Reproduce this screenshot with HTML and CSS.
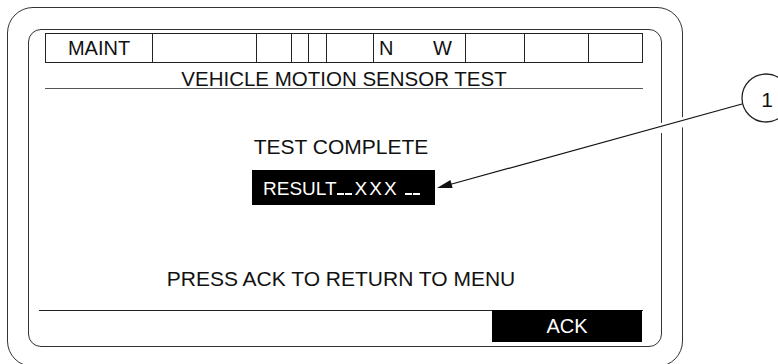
FILE: index.html
```html
<!DOCTYPE html>
<html lang="en">
<head>
  <meta charset="UTF-8">
  <title>Vehicle Motion Sensor Test</title>
  <link rel="stylesheet" href="styles.css">
</head>
<body>
  <div class="panel">
    <div class="screen">
      <div class="status">
        <div class="cell">MAINT</div>
        <div class="cell"></div>
        <div class="cell"></div>
        <div class="cell"></div>
        <div class="cell"></div>
        <div class="cell"></div>
        <div class="cell split"><span>N</span><span>W</span></div>
        <div class="cell"></div>
        <div class="cell"></div>
        <div class="cell"></div>
      </div>
      <div class="title">VEHICLE MOTION SENSOR TEST</div>

      <div class="message">TEST COMPLETE</div>
      <div class="result">
        <span>RESULT</span><span class="blank"><i></i><i></i></span><span class="value">XXX</span><span class="blank tail"><i></i><i></i></span>
      </div>
      <div class="prompt">PRESS ACK TO RETURN TO MENU</div>

      <div class="softkeys">
        <div class="key">ACK</div>
      </div>
    </div>
  </div>

  <!-- callout 1 -->
  <svg class="callout" width="778" height="364" viewBox="0 0 778 364">
    <line x1="650" y1="131" x2="695" y2="119" stroke="#fff" stroke-width="10"/>
    <line x1="742" y1="104" x2="450" y2="184.5" stroke="#111" stroke-width="1.2"/>
    <polygon points="437,188 452.6,187.9 450.4,180.1" fill="#111"/>
    <circle cx="766" cy="98" r="24" fill="#fff" stroke="#222" stroke-width="1.3"/>
    <text x="767" y="107" text-anchor="middle" class="callout-num">1</text>
  </svg>
</body>
</html>
```

FILE: styles.css
```css
* {
  box-sizing: border-box;
}

body {
  margin: 0;
  position: relative;
  width: 778px;
  height: 364px;
  overflow: hidden;
  background-color: #fff;
  color: #111;
  font-family: "Liberation Sans", Arial, sans-serif;
}

.panel {
  margin: 7px 0 0 7px;
  width: 676px;
  height: 360px;
  padding: 21px 20px 0 20px;
  border: 1px solid #333;
  border-radius: 26px;
}

.screen {
  display: flex;
  flex-direction: column;
  width: 634px;
  height: 318px;
  padding: 3px 18px 4px 10px;
  border: 1px solid #333;
  border-radius: 13px;

  .status {
    display: grid;
    grid-template-columns: 106px 104px 35px 17px 18px 47px 92px 59px 64px 54px;
    margin-left: 6px;
    width: 598px;
    height: 30px;
    border: 1px solid #222;
    font-size: 20px;
    line-height: 28px;
  }

  .cell {
    text-align: center;
    border-left: 1px solid #222;
  }

  .cell:first-child {
    border-left: none;
  }

  .split {
    display: flex;
    justify-content: space-between;
    padding: 0 13px 0 5px;
  }

  .title {
    margin-left: 6px;
    width: 598px;
    padding-top: 6px;
    font-size: 20.5px;
    line-height: 19px;
    text-align: center;
    border-bottom: 1px solid #555;
  }

  .message {
    margin-top: 46px;
    font-size: 21px;
    line-height: 24px;
    text-align: center;
  }

  .result {
    display: flex;
    align-items: baseline;
    align-self: center;
    margin: 11px 0 0 5px;
    width: 183px;
    height: 35px;
    padding: 3px 0 0 11px;
    background-color: #000;
    color: #fff;
    font-size: 19px;
    line-height: 32px;
  }

  .blank {
    display: flex;
    gap: 1px;
    margin-left: 0;

    i {
      display: block;
      width: 7px;
      height: 2px;
      background-color: #fff;
    }
  }

  .value {
    margin-left: 3px;
    letter-spacing: 2px;
  }

  .tail {
    margin-left: 6px;
  }

  .prompt {
    margin-top: 62px;
    font-size: 21px;
    line-height: 24px;
    text-align: center;
  }

  .softkeys {
    display: flex;
    justify-content: flex-end;
    margin-top: auto;
    height: 32px;
    border-top: 1px solid #222;
  }

  .key {
    width: 150px;
    height: 32px;
    margin: -1px 1px 0 0;
    background-color: #000;
    color: #fff;
    font-size: 20px;
    line-height: 32px;
    text-align: center;
  }
}

.callout {
  position: absolute;
  top: 0;
  left: 0;
  pointer-events: none;
}

.callout-num {
  font-family: "Liberation Sans", Arial, sans-serif;
  font-size: 21px;
  fill: #111;
}
```
